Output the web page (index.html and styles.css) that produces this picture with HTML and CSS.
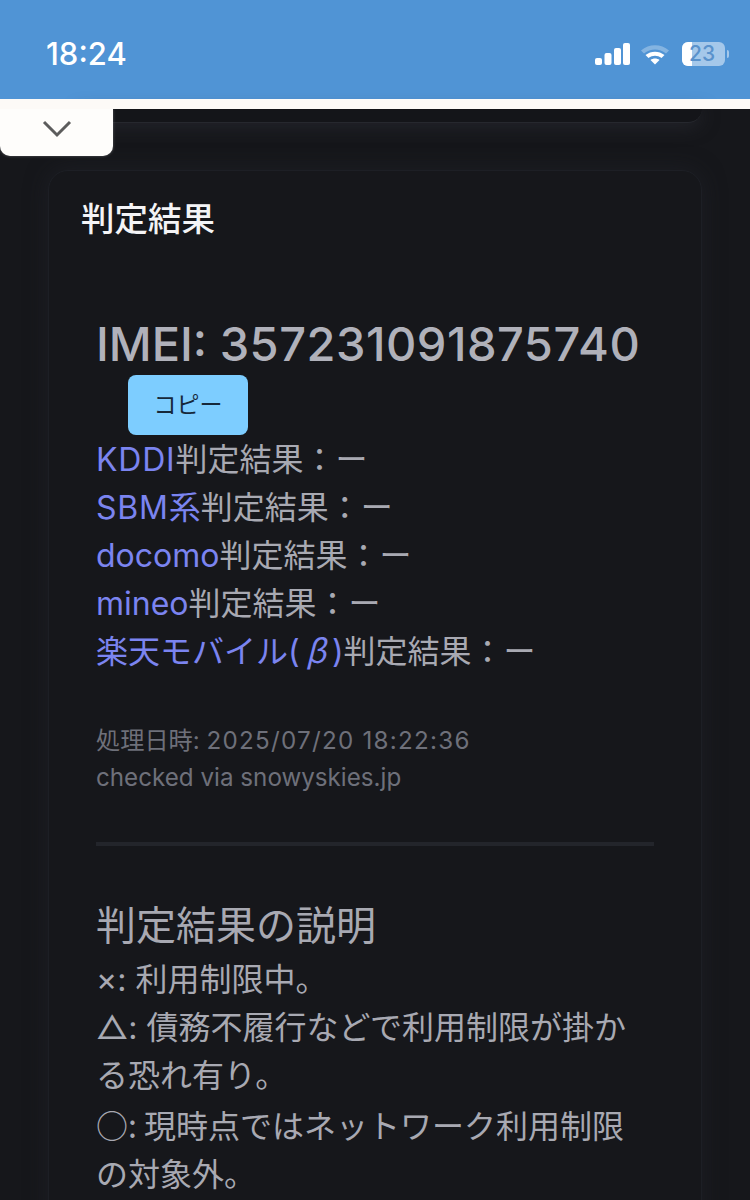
FILE: index.html
```html
<!DOCTYPE html>
<html lang="ja">
<head>
  <meta charset="UTF-8" />
  <meta name="viewport" content="width=device-width, initial-scale=1.0" />
  <title>判定結果</title>
  <link rel="stylesheet" href="styles.css">
</head>
<body>
  <div class="status-bar">
    <span class="time">18:24</span>
    <div class="status-icons">
      <svg class="signal" viewBox="0 0 35 22" width="35" height="22">
        <rect x="0" y="15" width="7" height="7" rx="2" />
        <rect x="9.5" y="10" width="7" height="12" rx="2" />
        <rect x="19" y="5" width="7" height="17" rx="2" />
        <rect x="28" y="0" width="7" height="22" rx="2" />
      </svg>
      <svg class="wifi" viewBox="0 0 30 22" width="30" height="22">
        <path class="wifi-off" d="M1 7.5 C9 0.5 21 0.5 29 7.5 L26 10.5 C19.500 5 10.500 5 4 10.500 Z" />
        <path d="M5.500 12 C11 7.500 19 7.500 24.500 12 L21.500 15 C17.500 12 12.500 12 8.500 15 Z" />
        <path d="M10.500 17 C13 15 17 15 19.500 17 L15 21.500 Z" />
      </svg>
      <div class="battery">
        <div class="battery-fill"></div>
        <span class="battery-num">23</span>
      </div>
      <div class="battery-tip"></div>
    </div>
  </div>
  <div class="white-strip"></div>

  <div class="tab">
    <svg viewBox="0 0 30 20" width="30" height="20">
      <path d="M2 3 L15 16 L28 3" fill="none" stroke="#5c5c5c" stroke-width="3" />
    </svg>
  </div>

  <div class="page">
    <div class="prev-card"></div>

    <div class="card">
      <h2 class="card-title">判定結果</h2>

      <div class="result">
        <div class="imei">IMEI: <span class="imei-num">357231091875740</span></div>
        <button class="copy-btn">コピー</button>
        <div class="rows">
          <div><a class="caps" href="#">KDDI</a>判定結果：ー</div>
          <div><a class="caps" href="#">SBM</a><a href="#">系</a>判定結果：ー</div>
          <div><a href="#">docomo</a>判定結果：ー</div>
          <div><a href="#">mineo</a>判定結果：ー</div>
          <div><a href="#">楽天モバイル(<span class="beta">β</span>)</a>判定結果：ー</div>
        </div>
        <p class="meta">処理日時: <span class="meta-date">2025/07/20 18:22:36</span><br>checked via snowyskies.jp</p>
        <hr class="divider">
        <h3 class="legend-title">判定結果の説明</h3>
        <div class="legend">
          <div>×: 利用制限中。</div>
          <div>△: 債務不履行などで利用制限が掛かる恐れ有り。</div>
          <div class="legend-cjk">○: 現時点ではネットワーク利用制限の対象外。</div>
        </div>
      </div>
    </div>
  </div>
</body>
</html>
```

FILE: styles.css
```css
html, body {
  margin: 0;
  padding: 0;
  background: #16171b;
  font-family: Inter, "Noto Sans CJK JP", sans-serif;
  overflow: hidden;
  height: 1200px;
}
.status-bar {
  height: 99px;
  background: #5094d5;
  color: #fff;
  display: flex;
  justify-content: space-between;
  align-items: flex-start;
  box-sizing: border-box;
  padding: 36px 0 0 46px;
}
.time {
  font-size: 31px;
  font-weight: 500;
  line-height: 36px;
}
.status-icons {
  display: flex;
  align-items: center;
  margin-top: 6px;
  margin-right: 21px;
}
.signal {
  fill: #fff;
  margin-right: 10px;
}
.wifi {
  fill: #fff;
  margin-right: 12px;
}
.wifi-off {
  opacity: 0.3;
}
.battery {
  position: relative;
  width: 43px;
  height: 24px;
  border-radius: 6px;
  background: #a5c8ea;
  overflow: hidden;
}
.battery-fill {
  width: 10px;
  height: 24px;
  background: #fff;
}
.battery-num {
  position: absolute;
  left: 7px;
  top: 0;
  font-size: 21px;
  line-height: 24px;
  font-weight: 500;
  color: #5a92cc;
}
.battery-tip {
  width: 2px;
  height: 8px;
  margin-left: 2px;
  background: #a5c8ea;
  border-radius: 0 2px 2px 0;
}
.white-strip {
  position: relative;
  z-index: 1;
  height: 10px;
  background: #fdfaf7;
}
.tab {
  position: absolute;
  z-index: 2;
  left: 0;
  top: 109px;
  width: 113px;
  height: 47px;
  background: #fefdfb;
  border-radius: 0 0 10px 10px;
  box-shadow: 0 0 3px rgba(255, 255, 255, 0.3);
  display: flex;
  justify-content: center;
  padding-top: 10px;
  box-sizing: border-box;
}
.page {
  padding: 0 48px;
}
.prev-card {
  height: 13px;
  background: #141519;
  border-bottom: 1px solid #26282e;
  border-radius: 0 0 16px 16px;
  box-shadow: 0 3px 18px rgba(48, 50, 58, 0.6);
  margin: 0 0 47px 32px;
}
.card {
  border: 1px solid #1d1f25;
  border-radius: 20px;
  background: #16171b;
  padding: 30px 47px 0 32px;
  height: 1100px;
  box-sizing: border-box;
  box-shadow: 0 0 22px rgba(36, 38, 46, 0.5);
}
.card-title {
  margin: 0;
  font-size: 33.500px;
  font-weight: 500;
  line-height: 36px;
  color: #f4f4f6;
}
.result {
  margin-top: 77px;
  padding-left: 15px;
  color: #a8a9b2;
}
.imei {
  font-size: 47px;
  font-weight: 500;
  line-height: 60px;
  white-space: nowrap;
  color: #b0b1ba;
}
.imei-num {
  letter-spacing: 0.500px;
}
.copy-btn {
  display: block;
  width: 120px;
  height: 60px;
  margin: 1px 0 0 32px;
  padding: 0 0 4px;
  border: none;
  border-radius: 8px;
  background: #7dcdff;
  color: #16283a;
  font-family: inherit;
  font-size: 23px;
  font-weight: 400;
}
.rows {
  margin-top: 1px;
  font-size: 32px;
  line-height: 48px;
  font-weight: 400;
}
.rows a {
  color: #7b84f0;
  text-decoration: none;
}
.rows .caps {
  letter-spacing: 0.800px;
}
.beta {
  font-family: "Noto Sans CJK JP", sans-serif;
  font-style: italic;
  line-height: 1;
  padding: 0 6px 0 6px;
}
.meta {
  margin: 46px 0 0;
  font-size: 24.200px;
  line-height: 37px;
  font-weight: 400;
  color: #6e707a;
}
.meta-date {
  letter-spacing: 1.250px;
}
.divider {
  margin: 46px 0 0;
  border: none;
  height: 4px;
  background: #23252b;
}
.legend-title {
  margin: 50px 0 0;
  font-size: 40px;
  line-height: 60px;
  font-weight: 400;
  color: #a8a9b2;
}
.legend {
  font-size: 32px;
  line-height: 48px;
  font-weight: 400;
}
.legend-cjk {
  font-family: "Noto Sans CJK JP", sans-serif;
}
```
